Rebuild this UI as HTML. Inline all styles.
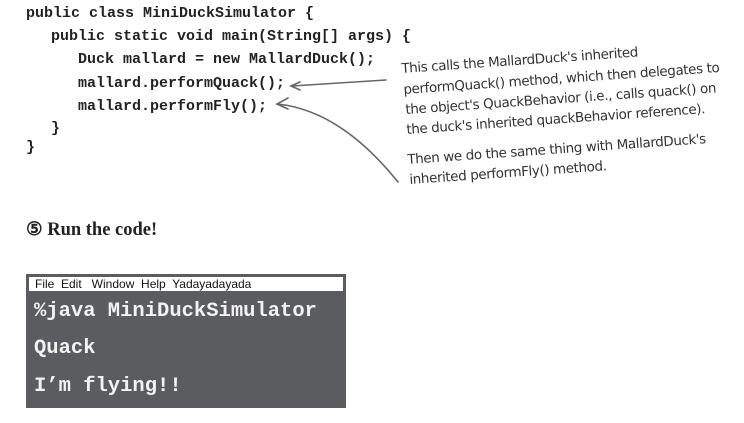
<!DOCTYPE html>
<html><head><meta charset="utf-8"><style>
body{margin:0;width:744px;height:423px;background:#fff;position:relative;overflow:hidden;font-family:"Liberation Sans",sans-serif}
.c{position:absolute;font:bold 15px/1 "Liberation Mono",monospace;color:#222;white-space:pre}
.h{position:absolute;font:13.5px/1 "DejaVu Sans","Liberation Sans",sans-serif;color:#333;white-space:pre;transform-origin:0 0;letter-spacing:-0.4px}
.t{position:absolute;left:34px;font:bold 20.5px/1 "Liberation Mono",monospace;color:#f2f2f2;white-space:pre}
</style></head><body>
<div class="c" style="left:26px;top:6px">public class MiniDuckSimulator {</div>
<div class="c" style="left:51px;top:29px">public static void main(String[] args) {</div>
<div class="c" style="left:78px;top:52px">Duck mallard = new MallardDuck();</div>
<div class="c" style="left:78px;top:76px">mallard.performQuack();</div>
<div class="c" style="left:78px;top:99px">mallard.performFly();</div>
<div class="c" style="left:51px;top:121px">}</div>
<div class="c" style="left:26px;top:140px">}</div>
<svg style="position:absolute;left:0;top:0" width="744" height="423">
<g fill="none" stroke="#666" stroke-width="1.6" stroke-linecap="round">
<path d="M292 86 Q340 83 386 80"/><path d="M300 82 L291 86 L300 90"/>
<path d="M277 104 Q340 110 398 182"/><path d="M288 98 L277 104 L288 109"/>
</g></svg>
<div class="h" style="left:401px;top:63px;transform:rotate(-4deg)">This calls the MallardDuck's inherited</div>
<div class="h" style="left:403px;top:84px;transform:rotate(-4deg)">performQuack() method, which then delegates to</div>
<div class="h" style="left:405px;top:104px;transform:rotate(-4deg)">the object's QuackBehavior (i.e., calls quack() on</div>
<div class="h" style="left:406px;top:124px;transform:rotate(-4deg)">the duck's inherited quackBehavior reference).</div>
<div class="h" style="left:407px;top:154px;transform:rotate(-4deg)">Then we do the same thing with MallardDuck's</div>
<div class="h" style="left:409px;top:174px;transform:rotate(-4deg)">inherited performFly() method.</div>
<div style="position:absolute;left:26px;top:221px;font:bold 18.5px/1 'Liberation Serif',serif;color:#222">⑤ Run the code!</div>
<div style="position:absolute;left:26px;top:274px;width:320px;height:134px;background:#5b5c5f"></div>
<div style="position:absolute;left:29px;top:277px;width:314px;height:14px;background:#fff;font:12px/14px 'Liberation Sans',sans-serif;color:#111;white-space:pre;padding-left:6px;box-sizing:border-box">File  Edit   Window  Help  Yadayadayada</div>
<div class="t" style="top:302px">%java MiniDuckSimulator</div>
<div class="t" style="top:339px">Quack</div>
<div class="t" style="top:377px">I’m flying!!</div>
</body></html>
